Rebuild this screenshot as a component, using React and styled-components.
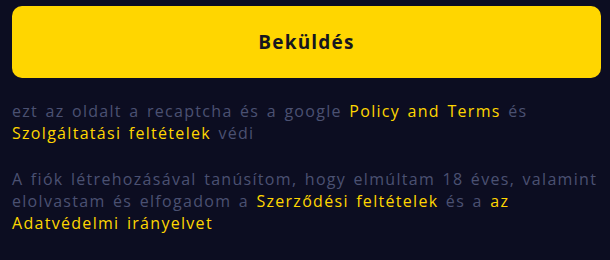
import React from "react"
import styled, { createGlobalStyle } from "styled-components"

const Global = createGlobalStyle`
  html, body {
    margin: 0;
    padding: 0;
    background: #0c0d21;
  }
`

const App = () => {
  return (
    <Container>
      <Global />
      <Submit>Beküldés</Submit>
      <Note>
        ezt az oldalt a recaptcha és a google <Link>Policy and Terms</Link> és
        <br />
        <Link>Szolgáltatási feltételek</Link> védi
      </Note>
      <Note>
        A fiók létrehozásával tanúsítom, hogy elmúltam 18 éves, valamint
        <br />
        elolvastam és elfogadom a <Link>Szerződési feltételek</Link> és a <Link>az</Link>
        <br />
        <Link>Adatvédelmi irányelvet</Link>
      </Note>
    </Container>
  )
}

export default App

const Container = styled.div`
  width: 610px;
  height: 260px;
  box-sizing: border-box;
  padding: 6px 9px 0 12px;
  background: #0c0d21;
  font-family: "Open Sans", "Liberation Sans", sans-serif;
  display: flex;
  flex-direction: column;
`
const Submit = styled.button`
  height: 72px;
  width: 100%;
  border: none;
  border-radius: 10px;
  background: #ffd600;
  color: #16161f;
  font-family: inherit;
  font-size: 19px;
  font-weight: 700;
  letter-spacing: 1.2px;
  cursor: pointer;
  margin-bottom: 22px;
`
const Note = styled.p`
  margin: 0 0 24px 0;
  color: #4b5172;
  font-size: 16px;
  line-height: 22px;
  letter-spacing: 1.3px;
  word-spacing: 2px;
  white-space: nowrap;
`
const Link = styled.span`
  color: #ffd600;
  font-weight: 500;
`
